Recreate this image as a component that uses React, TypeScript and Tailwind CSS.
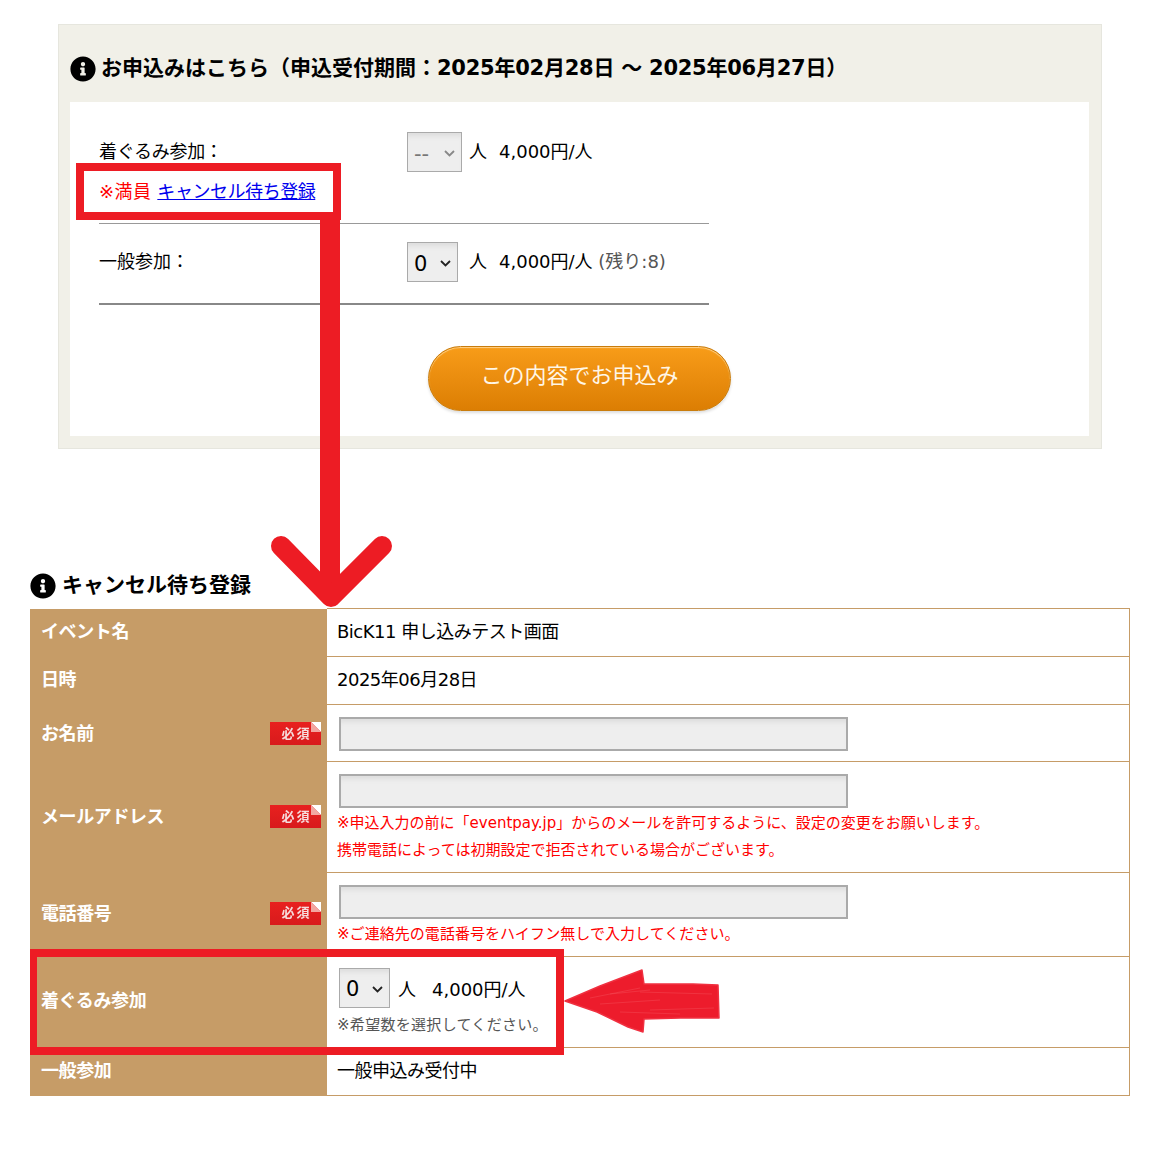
import { FaInfoCircle } from "react-icons/fa";

const font = { fontFamily: '"DejaVu Sans", "Noto Sans CJK JP", sans-serif' };

function Badge() {
  return (
    <div className="relative flex h-[23px] w-[51px] items-center justify-center bg-gradient-to-b from-[#e8211f] to-[#d81a1c] pl-[2px] text-[13px] font-bold tracking-[2px] text-[#f6dcdc]">
      <span className="blur-[0.4px]">必須</span>
      <svg className="absolute right-0 top-0" width="10" height="10" viewBox="0 0 10 10">
        <path d="M0 0H10V10Z" fill="#fff" />
        <path d="M0 0L10 10H0Z" fill="#f2a6a0" />
      </svg>
    </div>
  );
}

function Sel({ value, disabled, w }: { value: string; disabled?: boolean; w: string }) {
  return (
    <div className={`relative h-[40px] shrink-0 ${w}`}>
      <select
        disabled={disabled}
        defaultValue={value}
        className={`block h-full w-full appearance-none rounded-none border border-[#aaaaaa] bg-[#eeeeee] pl-[6px] pt-[5px] text-[21px] shadow-[inset_0_6px_5px_-3px_#dddddd] ${
          disabled ? "text-[#777777]" : "text-black"
        }`}
      >
        <option value={value}>{value}</option>
      </select>
      <svg className="pointer-events-none absolute right-[7px] top-[18px]" width="11" height="7" viewBox="0 0 11 7">
        <path d="M1 1L5.5 5.5L10 1" fill="none" stroke={disabled ? "#888888" : "#222222"} strokeWidth="1.8" />
      </svg>
    </div>
  );
}

function TextBox() {
  return (
    <input
      type="text"
      className="ml-[2px] block h-[34px] w-[509px] border-2 border-[#aaaaaa] bg-[#eeeeee] shadow-[inset_0_6px_5px_-3px_#dddddd]"
    />
  );
}

function Th({ label, badge, row }: { label: string; badge?: boolean; row: string }) {
  return (
    <th className={`${row} w-[297px] bg-[#c69c67] p-0 pl-[11px] pr-[6px] text-left align-middle text-[18px] font-bold tracking-[-0.4px] text-white`}>
      <div className="flex items-center justify-between">
        <span>{label}</span>
        {badge && <Badge />}
      </div>
    </th>
  );
}

const td = "border border-[#c69c67] border-l-0 p-0 pl-[10px] align-middle text-[18px] text-black";

export default function App() {
  return (
    <div className="relative h-[1170px] w-[1160px] overflow-hidden bg-white" style={font}>
      <div className="pt-[24px]">
        <section className="ml-[58px] w-[1044px] border border-[#e6e6de] bg-[#f1f0e8] pb-[12px] pl-[11px] pr-[12px]">
          <h2 className="flex h-[77px] items-center gap-[5px] pt-[11px] text-[21px] font-bold text-black">
            <FaInfoCircle size={26} />
            <span className="pb-[1px]">
              お申込みはこちら（申込受付期間：<span className="tracking-[-0.25px]">2025年02月28日 ～ 2025年06月27日</span>）
            </span>
          </h2>
          <div className="bg-white pl-[29px] pb-[25px]">
            <div className="h-[122px] w-[610px] border-b border-[#999999] pt-[30px]">
              <div className="flex">
                <div className="w-[308px] pt-[5px] text-[18px] leading-[30px]">
                  <div className="tracking-[-0.3px]">着ぐるみ参加：</div>
                  <div className="mt-[10px] whitespace-nowrap">
                    <span className="tracking-[0.5px] text-[#ff0000]">※満員</span>{" "}
                    <a href="#" className="tracking-[-0.45px] text-[#0000ee] underline">キャンセル待ち登録</a>
                  </div>
                </div>
                <div className="flex h-[40px] items-center gap-[7px] text-[18px]">
                  <Sel value="--" disabled w="w-[55px]" />
                  <span className="w-[23px] pb-[2px]">人</span>
                  <span className="pb-[2px]">4,000円/人</span>
                </div>
              </div>
            </div>
            <div className="h-[81px] w-[610px] border-b-2 border-[#888888] pt-[18px]">
              <div className="flex">
                <div className="w-[308px] pt-[5px] text-[18px] leading-[30px]">一般参加：</div>
                <div className="flex h-[40px] items-center gap-[11px] text-[18px]">
                  <Sel value="0" w="w-[51px]" />
                  <span className="w-[19px] pb-[2px]">人</span>
                  <span className="pb-[2px]">
                    4,000円/人 <span className="text-[#555555]">(残り:8)</span>
                  </span>
                </div>
              </div>
            </div>
            <div className="mt-[41px] flex justify-center pr-[29px]">
              <button className="h-[65px] w-[303px] rounded-full border border-[#c97c0c] bg-gradient-to-b from-[#f89c18] to-[#dc7e03] pb-[6px] text-[22px] text-[#fff6e6] shadow-[inset_0_1px_1px_#ffd28a,0_2px_3px_#dddddd]">
                この内容でお申込み
              </button>
            </div>
          </div>
        </section>
      </div>

      <section className="ml-[30px] mt-[124px] w-[1100px]">
        <h2 className="flex h-[35px] items-center gap-[5px] pb-[10px] text-[21px] font-bold text-black">
          <FaInfoCircle size={26} />
          <span className="pl-[1px]">キャンセル待ち登録</span>
        </h2>
        <table className="w-[1100px] table-fixed border-collapse">
          <tbody>
            <tr>
              <Th label="イベント名" row="h-[48px] pb-[2px]" />
              <td className={`${td} pb-[2px] tracking-[-0.5px]`}>BicK11 申し込みテスト画面</td>
            </tr>
            <tr>
              <Th label="日時" row="h-[48px] pb-[2px]" />
              <td className={`${td} pb-[2px] tracking-[-0.5px]`}>2025年06月28日</td>
            </tr>
            <tr>
              <Th label="お名前" badge row="h-[57px] pt-[1px]" />
              <td className={`${td} pt-[2px]`}>
                <TextBox />
              </td>
            </tr>
            <tr>
              <Th label="メールアドレス" badge row="h-[111px] pb-[1px]" />
              <td className={`${td} pt-[3px]`}>
                <TextBox />
                <p className="mt-[2px] text-[15px] leading-[27px] text-[#ff0000]">
                  ※申込入力の前に「eventpay.jp」からのメールを許可するように、設定の変更をお願いします。
                  <br />
                  携帯電話によっては初期設定で拒否されている場合がございます。
                </p>
              </td>
            </tr>
            <tr>
              <Th label="電話番号" badge row="h-[84px] pb-[3px]" />
              <td className={`${td} pt-[3px]`}>
                <TextBox />
                <p className="mt-[2px] text-[15px] leading-[27px] tracking-[0.05px] text-[#ff0000]">
                  ※ご連絡先の電話番号をハイフン無しで入力してください。
                </p>
              </td>
            </tr>
            <tr>
              <Th label="着ぐるみ参加" row="h-[91px] pb-[3px]" />
              <td className={`${td} pt-[1px]`}>
                <div className="ml-[2px] flex h-[40px] items-center gap-[8px]">
                  <Sel value="0" w="w-[51px]" />
                  <span className="w-[26px] pt-[3px]">人</span>
                  <span className="pt-[3px]">4,000円/人</span>
                </div>
                <p className="mt-[4px] text-[15px] leading-[26px] tracking-[0.3px] text-[#555555]">※希望数を選択してください。</p>
              </td>
            </tr>
            <tr>
              <Th label="一般参加" row="h-[48px] pb-[3px]" />
              <td className={`${td} pb-[2px] tracking-[-0.5px]`}>一般申込み受付中</td>
            </tr>
          </tbody>
        </table>
      </section>

      {/* Annotations drawn over the page */}
      <div className="pointer-events-none absolute left-[76px] top-[163px] h-[57px] w-[265px] border-[8px] border-[#ed1c24]" />
      <div className="pointer-events-none absolute left-[30px] top-[949px] h-[106px] w-[534px] border-[8px] border-l-[7px] border-[#ed1c24]" />
      <svg className="pointer-events-none absolute left-0 top-0" width="1160" height="1170" viewBox="0 0 1160 1170">
        <path d="M330 220V596" stroke="#ed1c24" strokeWidth="20" fill="none" />
        <path d="M281 546L331 597L382 546" stroke="#ed1c24" strokeWidth="20" strokeLinecap="round" strokeLinejoin="round" fill="none" />
        <path
          d="M565 1001L600 986L642 970L644 984L693 984L718 985L719 1018L680 1018L644 1019L643 1032L628 1027L597 1012Z"
          fill="#ed1c2c"
          stroke="#f03040"
          strokeWidth="1.5"
          strokeLinejoin="round"
        />
        <path
          d="M590 998L640 988M600 1004L660 1000M640 992L712 994M650 1010L714 1008M610 994L650 990M620 1012L680 1014"
          stroke="#f4565e"
          strokeWidth="1"
          opacity="0.4"
          fill="none"
        />
      </svg>
    </div>
  );
}
